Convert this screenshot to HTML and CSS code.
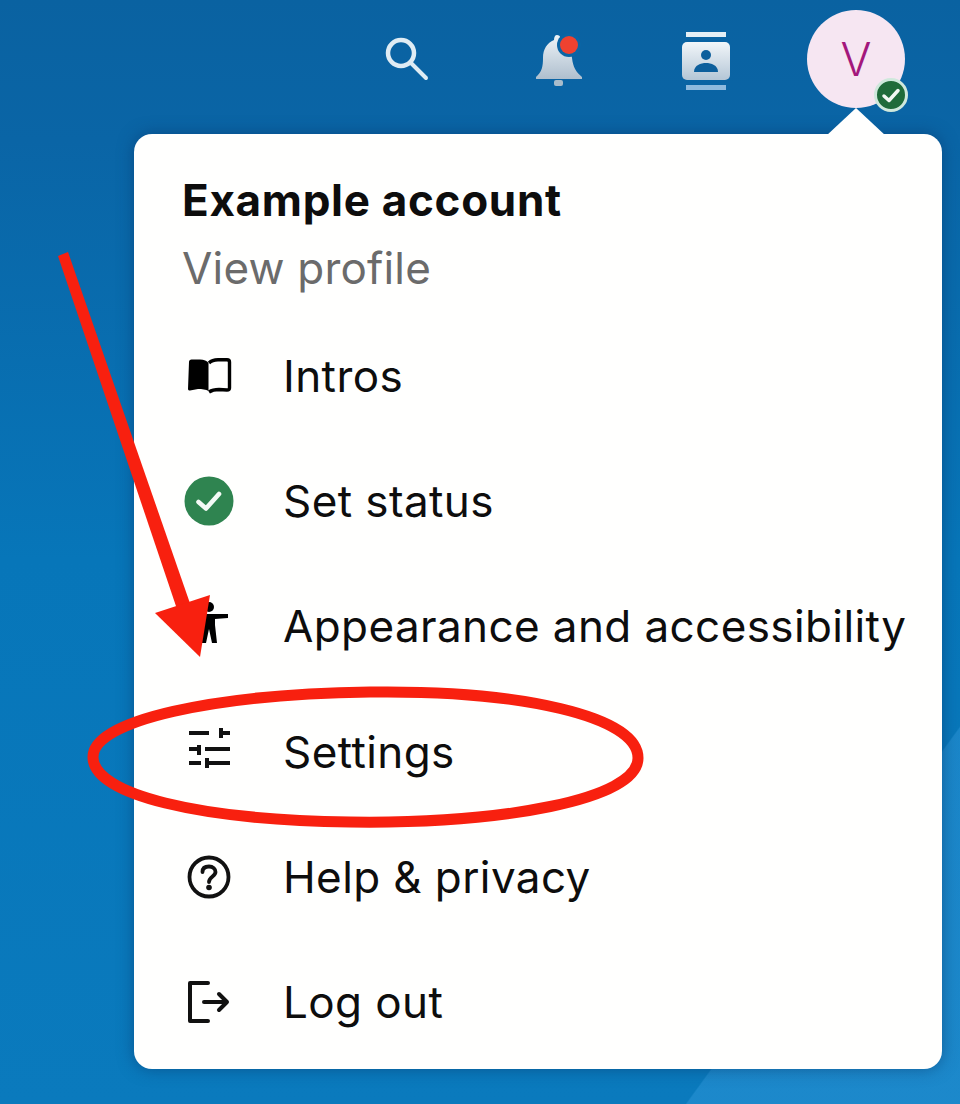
FILE: index.html
```html
<!DOCTYPE html>
<html lang="en">
<head>
  <meta charset="UTF-8">
  <title>Account menu</title>
  <link rel="stylesheet" href="styles.css">
</head>
<body>
  <div class="screen">
    <header class="topbar">
      <div class="top-icon">
        <svg width="50" height="50" viewBox="0 0 50 50" fill="none" stroke="#dfecf4" stroke-width="4.5" stroke-linecap="round">
          <circle cx="20" cy="19" r="13"/>
          <path d="M30 29 L45 44" stroke-width="4"/>
        </svg>
      </div>
      <div class="top-icon">
        <svg width="56" height="56" viewBox="-3 -1 56 56">
          <defs>
            <linearGradient id="bellFill" x1="0" y1="0" x2="0" y2="1">
              <stop offset="0" stop-color="#eef3f7"/>
              <stop offset="1" stop-color="#aebfce"/>
            </linearGradient>
          </defs>
          <path d="M26 3 C29 3 30 6 30 9 C37 12 40 18 41 26 C42 35 45 40 51 45 L51 47 L5 47 L5 45 C11 40 12 34 12 26 C12 17 16 11 23 8 C23 5 24 3 26 3 Z" fill="url(#bellFill)"/>
          <rect x="23" y="48" width="9" height="6" rx="2" fill="#a9bccb"/>
          <circle cx="38" cy="13" r="12" fill="#0a65a5"/>
          <circle cx="38" cy="13" r="9" fill="#ef4230"/>
        </svg>
      </div>
      <div class="top-icon top-icon-card">
        <svg width="50" height="60" viewBox="0 0 50 60">
          <defs>
            <linearGradient id="cardFill" x1="0" y1="0" x2="0" y2="1">
              <stop offset="0" stop-color="#f2f6f9"/>
              <stop offset="1" stop-color="#b4c6d6"/>
            </linearGradient>
          </defs>
          <rect x="5" y="1" width="40" height="5" fill="#e4eef5"/>
          <rect x="1" y="11" width="48" height="38" rx="5" fill="url(#cardFill)"/>
          <rect x="5" y="54" width="40" height="5" fill="#8fbade"/>
          <circle cx="25" cy="24" r="5" fill="#0d5f9c"/>
          <path d="M13 41 C13 34 20 32 25 32 C30 32 37 34 37 41 Z" fill="#0d5f9c"/>
        </svg>
      </div>
      <div class="avatar">
        V
        <span class="badge">
          <svg width="34" height="34" viewBox="0 0 34 34">
            <circle cx="17" cy="17" r="15.5" fill="#1f6b3a" stroke="#cfe8dc" stroke-width="3"/>
            <path d="M10 18 L15 22.5 L24 12.5" fill="none" stroke="#f2f7f3" stroke-width="3.5" stroke-linecap="round" stroke-linejoin="round"/>
          </svg>
        </span>
      </div>
    </header>

    <div class="menu">
      <div class="menu-head">
        <div class="account-name">Example account</div>
        <div class="view-profile">View profile</div>
      </div>
      <ul class="menu-list">
        <li class="menu-item">
          <span class="menu-icon">
            <svg width="46" height="36" viewBox="0 0 46 36">
              <path d="M3 4 C3 2.500 4 1.500 5.500 1.500 L14 1.500 C18 1.500 21 3 22.500 5 L22.500 33 C20 31.500 16 31 12 31 L4 32.500 C3 32.500 2 32 2 31 Z" fill="#000"/>
              <path d="M23 5 C25 3 28 1.800 32 1.800 L41 1.800 C42.800 1.800 43.500 2.800 43.500 4 L43.500 30 C43.500 31.500 42.500 32 41 32 L33 31.500 C29 31.500 26 32 23 34" fill="none" stroke="#000" stroke-width="3.4" stroke-linejoin="round"/>
            </svg>
          </span>
          Intros
        </li>
        <li class="menu-item">
          <span class="menu-icon">
            <svg width="50" height="50" viewBox="0 0 50 50">
              <circle cx="25" cy="25" r="24.5" fill="#2f8450"/>
              <path d="M14.5 26 L22 32.5 L35 18" fill="none" stroke="#f4faf6" stroke-width="4.6" stroke-linecap="round" stroke-linejoin="round"/>
            </svg>
          </span>
          Set status
        </li>
        <li class="menu-item">
          <span class="menu-icon">
            <svg width="50" height="50" viewBox="0 0 50 50">
              <circle cx="25" cy="6" r="5" fill="#000"/>
              <path d="M19 13 L44 13 L44 17 L31 18 L31 24 L33 42 L28 42 L25 28 L22 42 L17 42 L19 24 Z" fill="#000"/>
            </svg>
          </span>
          Appearance and accessibility
        </li>
        <li class="menu-item">
          <span class="menu-icon">
            <svg width="44" height="48" viewBox="0 0 44 48" fill="none" stroke="#111" stroke-width="4">
              <path d="M2 5 H22 M34 0 V10 M34 5 H43"/>
              <path d="M2 21 H12 M12 17 V27 M18 21 H43"/>
              <path d="M2 35 H14 M20 30 V40 M20 35 H43"/>
            </svg>
          </span>
          Settings
        </li>
        <li class="menu-item">
          <span class="menu-icon">
            <svg width="44" height="44" viewBox="0 0 44 44" fill="none" stroke="#111" stroke-width="3.8">
              <circle cx="22" cy="22" r="19.5"/>
              <path d="M15.500 17 C15.500 13 18.500 11.500 22 11.500 C26 11.500 28.500 14 28.500 17 C28.500 21.500 22 21.500 22 27" stroke-linecap="round"/>
              <circle cx="22" cy="32.500" r="2.800" fill="#111" stroke="none"/>
            </svg>
          </span>
          Help &amp; privacy
        </li>
        <li class="menu-item">
          <span class="menu-icon">
            <svg width="44" height="44" viewBox="0 0 44 44" fill="none" stroke="#111" stroke-width="4" stroke-linecap="round" stroke-linejoin="round">
              <path d="M21 3 H3 V41 H21"/>
              <path d="M17 22 H40 M32 14 L40 22 L32 30"/>
            </svg>
          </span>
          Log out
        </li>
      </ul>
    </div>

    <!-- red annotation drawn over the screenshot -->
    <svg class="annotation" width="960" height="1104" viewBox="0 0 960 1104">
      <path d="M58 256 L68 252 L193 612 L180 618 Z" fill="#f8200f"/>
      <path d="M155 613 L210 595 L200 657 Z" fill="#f8200f"/>
      <path d="M370 692 C520 690 638 716 638 758 C638 800 500 824 350 822 C200 820 93 795 93 757 C93 720 215 694 370 692 Z" fill="none" stroke="#f8200f" stroke-width="11"/>
    </svg>
  </div>
</body>
</html>
```

FILE: styles.css
```css
* {
  box-sizing: border-box;
}

body {
  margin: 0;
  font-family: Inter, "Liberation Sans", sans-serif;
  color: #0d0d0d;
}

.screen {
  position: relative;
  width: 960px;
  height: 1104px;
  overflow: hidden;
  background:
    linear-gradient(126deg, transparent 0 84.4%, rgba(70, 170, 235, 0.3) 84.5% 100%),
    linear-gradient(180deg, #0a62a1 0, #0a65a6 140px, #0776b9 560px, #0a7abd 1104px);
}

/* top bar */
.topbar {
  display: flex;
  justify-content: flex-end;
  align-items: center;
  gap: 52px;
  height: 134px;
  padding: 0 55px 16px 0;
}

.top-icon {
  width: 98px;
  display: flex;
  justify-content: center;
}

.top-icon-card {
  padding-top: 4px;
}

.avatar {
  position: relative;
  width: 98px;
  height: 98px;
  border-radius: 50%;
  background: #f6e6f2;
  color: #a3177c;
  font-size: 46px;
  font-weight: 300;
  line-height: 98px;
  text-align: center;
}

.badge {
  position: absolute;
  left: 67px;
  top: 68px;
  width: 34px;
  height: 34px;
  display: block;
  line-height: 0;
}

/* account menu */
.menu {
  position: relative;
  width: 808px;
  height: 935px;
  margin-left: 134px;
  background: #fffffe;
  border-radius: 18px;
  box-shadow: 0 0 16px rgba(8, 50, 100, 0.5);
}

.menu::before {
  content: "";
  position: absolute;
  left: 692px;
  top: -26px;
  border-left: 30px solid transparent;
  border-right: 30px solid transparent;
  border-bottom: 28px solid #fffffe;
}

.menu-head {
  padding: 42px 0 0 48px;
  height: 179px;
}

.account-name {
  font-size: 44px;
  font-weight: 700;
  line-height: 48px;
  letter-spacing: 0.7px;
}

.view-profile {
  margin-top: 20px;
  font-size: 44px;
  line-height: 48px;
  letter-spacing: 0.2px;
  color: #6b6b6b;
}

.menu-list {
  list-style: none;
  margin: 0;
  padding: 0;
}

.menu-item {
  display: flex;
  align-items: center;
  height: 125.3px;
  padding-left: 49px;
  font-size: 44px;
  letter-spacing: 0.4px;
}

.menu-icon {
  width: 52px;
  margin-right: 48px;
  display: flex;
  justify-content: center;
}

.annotation {
  position: absolute;
  left: 0;
  top: 0;
}
```
